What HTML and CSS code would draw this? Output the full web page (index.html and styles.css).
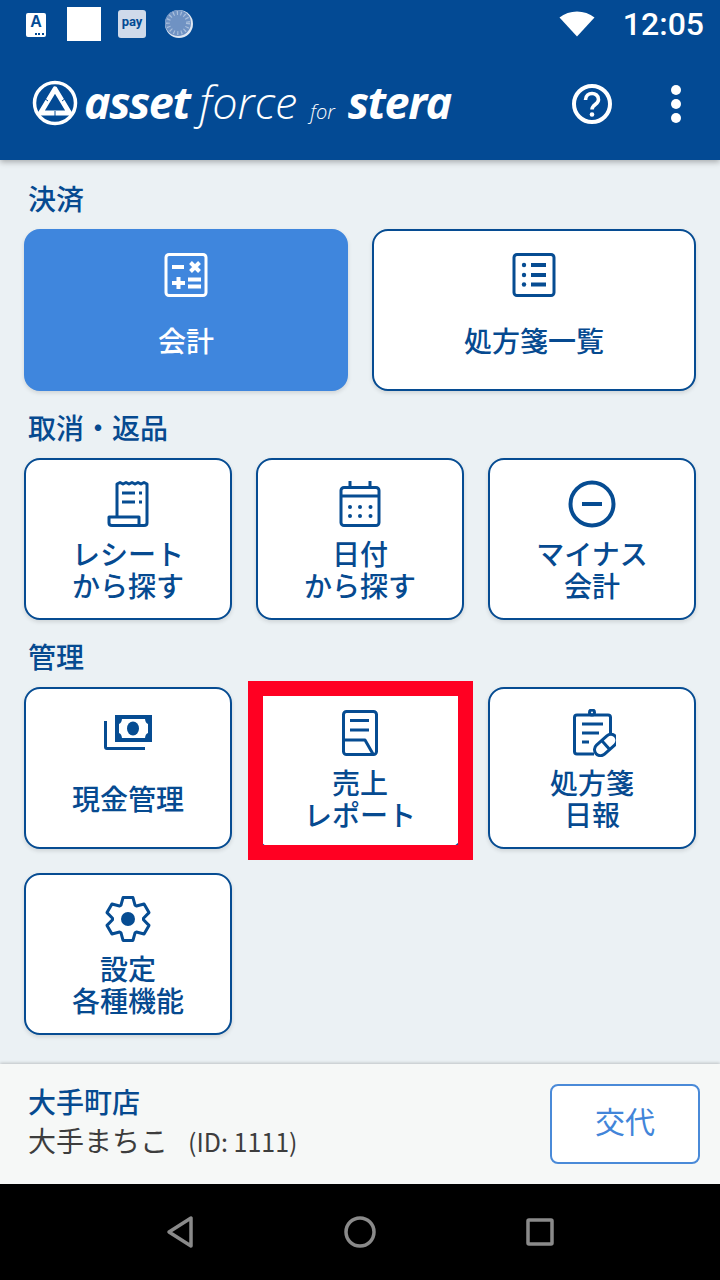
FILE: index.html
```html
<!DOCTYPE html>
<html lang="ja">
<head>
<meta charset="UTF-8">
<meta name="viewport" content="width=device-width, initial-scale=1.0">
<title>asset force for stera</title>
<link rel="stylesheet" href="styles.css">
</head>
<body>

<div class="top">
  <!-- status bar -->
  <div class="status-bar">
    <div class="notif-a"><span>A</span><i></i></div>
    <div class="notif-blank"></div>
    <div class="notif-pay">pay</div>
    <svg class="notif-sync" width="30" height="30" viewBox="0 0 30 30">
      <circle cx="15" cy="15" r="14" fill="#dfe7f2"/>
      <circle cx="14" cy="14" r="13" fill="#6f92c3"/>
      <circle cx="14" cy="14" r="10" fill="none" stroke="#a9bfdc" stroke-width="4" stroke-dasharray="1.2 2.6"/>
    </svg>
    <svg class="wifi" width="36" height="26" viewBox="0 0 36 26">
      <path d="M0.5 6.5C10 -1.5 26 -1.5 35.5 6.5L18 25.5Z" fill="#fff"/>
    </svg>
    <div class="clock">12:05</div>
  </div>

  <header class="app-bar">
    <div class="logo">
      <svg class="logo-mark" width="46" height="46" viewBox="0 0 46 46">
        <circle cx="23" cy="23" r="20.5" fill="none" stroke="#fff" stroke-width="3.5"/>
        <path d="M23 9L37.500 33H8.500Z" fill="none" stroke="#fff" stroke-width="5" stroke-linejoin="round"/>
        <path d="M12 18L16 21M34 18L30 21M23 31V36" fill="none" stroke="#034a94" stroke-width="1"/>
      </svg>
      <span class="logo-asset">asset</span>
      <span class="logo-force">force</span>
      <span class="logo-for">for</span>
      <span class="logo-stera">stera</span>
    </div>
    <div class="app-actions">
      <svg class="help" width="42" height="42" viewBox="0 0 42 42">
        <circle cx="21" cy="21" r="18" fill="none" stroke="#fff" stroke-width="4"/>
        <path d="M14.5 17C14.5 8.5 27.5 8.5 27.5 16.5C27.5 21.5 21 21.5 21 26.5" fill="none" stroke="#fff" stroke-width="3.6"/>
        <circle cx="21" cy="31.5" r="2.3" fill="#fff"/>
      </svg>
      <div class="kebab"><i></i><i></i><i></i></div>
    </div>
  </header>
</div>

<main class="content">
  <h2 class="section-title">決済</h2>
  <div class="grid two">
    <button class="card primary">
      <svg class="icon" viewBox="0 0 48 48">
        <rect x="4" y="3.5" width="40" height="41" rx="3" class="line"/>
        <path d="M10 16H22M28.500 11.500L37.500 20.500M37.500 11.500L28.500 20.500M10 32H23M16.500 26V38M26 28.500H39M26 35.500H39" class="line thick"/>
      </svg>
      <span class="card-label">会計</span>
    </button>
    <button class="card">
      <svg class="icon" viewBox="0 0 48 48">
        <rect x="4" y="3.5" width="40" height="41" rx="3" class="line"/>
        <path d="M21 14H36M21 24H36M21 33.5H36" class="line thick"/>
        <circle cx="14" cy="14" r="2.200" class="dot"/><circle cx="14" cy="24" r="2.200" class="dot"/><circle cx="14" cy="33.5" r="2.200" class="dot"/>
      </svg>
      <span class="card-label">処方箋一覧</span>
    </button>
  </div>

  <h2 class="section-title">取消・返品</h2>
  <div class="grid three">
    <button class="card">
      <svg class="icon" viewBox="0 0 48 48">
        <path d="M13 37V4L16 2.5L19 4L22 2.5L25 4L28 2.5L31 4L34 2.5L37 4L40 2.5L43 4V43C43 45 42 45.5 40 45.5H8C6 45.5 5 44.500 5 43V37H35V45" class="line"/>
        <path d="M18 13H31M18 22H31M35 13H38M35 22H38" class="line"/>
      </svg>
      <span class="card-label">レシート<br>から探す</span>
    </button>
    <button class="card">
      <svg class="icon" viewBox="0 0 48 48">
        <rect x="5" y="7.500" width="38" height="38" rx="3" class="line"/>
        <path d="M5 16H43M14 1V7M34 1V7" class="line"/>
        <circle cx="14" cy="27" r="2" class="dot"/><circle cx="24" cy="27" r="2" class="dot"/><circle cx="34.500" cy="27" r="2" class="dot"/>
        <circle cx="14" cy="36" r="2" class="dot"/><circle cx="24" cy="36" r="2" class="dot"/><circle cx="34.500" cy="36" r="2" class="dot"/>
      </svg>
      <span class="card-label">日付<br>から探す</span>
    </button>
    <button class="card">
      <svg class="icon" viewBox="0 0 48 48">
        <circle cx="24" cy="24" r="21.500" class="line thick"/>
        <path d="M14 24H34" class="line thick"/>
      </svg>
      <span class="card-label">マイナス<br>会計</span>
    </button>
  </div>

  <h2 class="section-title">管理</h2>
  <div class="grid three">
    <button class="card">
      <svg class="icon" viewBox="0 0 48 48">
        <path d="M1.500 12V38C1.500 39 2 39.500 3 39.500H41" class="line"/>
        <path d="M11 6H48V33H11Z" class="dot"/>
        <path d="M18 10H41C41.500 13 42 14 44 15V24C42 25 41.500 26 41 29H18C17.500 26 17 25 15 24V15C17 14 17.500 13 18 10Z" fill="#fff"/>
        <ellipse cx="29" cy="19.500" rx="6" ry="7" class="dot"/>
      </svg>
      <span class="card-label">現金管理</span>
    </button>
    <button class="card highlighted">
      <svg class="icon" viewBox="0 0 48 48">
        <rect x="7.500" y="2.500" width="33" height="43" rx="3" class="line"/>
        <path d="M14 11.500H33M14 21H33M8 31H29L37 45" class="line"/>
      </svg>
      <span class="card-label">売上<br>レポート</span>
      <span class="red-frame"></span>
    </button>
    <button class="card">
      <svg class="icon" viewBox="0 0 48 48">
        <path d="M26 45H9C7.500 45 6.500 44 6.500 42.500V8.500C6.500 7 7.500 6 9 6H40C41.500 6 42.500 7 42.500 8.500V25" class="line"/>
        <circle cx="24" cy="3.500" r="2.500" class="line"/>
        <path d="M14 15H35M14 24H31M14 33H21" class="line"/>
        <g transform="rotate(-42 37.700 36)">
          <rect x="24.700" y="30" width="26" height="12" rx="6" class="line"/>
          <path d="M37.700 30V42" class="line"/>
        </g>
      </svg>
      <span class="card-label">処方箋<br>日報</span>
    </button>
    <button class="card">
      <svg class="icon" viewBox="0 0 48 48">
        <polygon class="line" points="17,10.200 19.050,2.600 28.950,2.600 31.040,10.200 32.430,11 40.050,9 45,17.600 39.470,23.200 39.470,24.800 45,30.400 40.050,39 32.430,37 31.040,37.800 28.950,45.400 19.050,45.400 17,37.800 15.570,37 7.950,39 3,30.400 8.530,24.800 8.530,23.200 3,17.600 7.950,9 15.570,11"/>
        <circle cx="24" cy="24" r="7" class="dot"/>
      </svg>
      <span class="card-label">設定<br>各種機能</span>
    </button>
  </div>
</main>

<footer class="staff-bar">
  <div class="staff-info">
    <div class="shop-name">大手町店</div>
    <div class="staff-name">大手まちこ<span class="staff-id">(ID: 1111)</span></div>
  </div>
  <button class="swap-btn">交代</button>
</footer>

<nav class="nav-bar">
  <svg width="28" height="34" viewBox="0 0 28 34"><path d="M25 3V31L3 17Z" class="nav-shape"/></svg>
  <svg width="32" height="32" viewBox="0 0 32 32"><circle cx="16" cy="16" r="14" class="nav-shape"/></svg>
  <svg width="28" height="28" viewBox="0 0 28 28"><rect x="2" y="2" width="24" height="24" rx="1" class="nav-shape"/></svg>
</nav>

</body>
</html>
```

FILE: styles.css
```css
* {
  box-sizing: border-box;
}

html, body {
  margin: 0;
  height: 100%;
}

body {
  width: 720px;
  height: 1280px;
  display: flex;
  flex-direction: column;
  overflow: hidden;
  background: #ebf1f4;
  font-family: "Noto Sans CJK JP", "Noto Sans", sans-serif;
  color: #064a90;
}

/* status bar + app bar */
.top {
  background: #034a94;
  box-shadow: 0 2px 6px rgba(0, 0, 0, 0.3);
  position: relative;
  z-index: 2;
}

.status-bar {
  height: 48px;
  display: flex;
  align-items: center;
  padding: 0 16px 0 26px;
}

.notif-a {
  width: 20px;
  height: 24px;
  margin-top: 2px;
  background: #fff;
  border-radius: 2px;
  color: #034a94;
  font: bold 16px/18px "Liberation Sans", sans-serif;
  text-align: center;
  position: relative;
}

.notif-a i {
  position: absolute;
  right: 2px;
  bottom: 2px;
  width: 9px;
  height: 2px;
  background: repeating-linear-gradient(90deg, #034a94 0 2px, transparent 2px 3.5px);
}

.notif-blank {
  width: 34px;
  height: 34px;
  margin-left: 21px;
  background: #fff;
}

.notif-pay {
  width: 28px;
  height: 28px;
  margin-left: 17px;
  background: #cfdaea;
  border-radius: 3px;
  color: #034a94;
  font: bold 13px/24px "Roboto", sans-serif;
  text-align: center;
}

.notif-sync {
  margin-left: 18px;
}

.wifi {
  margin-left: auto;
  margin-right: 28px;
}

.clock {
  color: #fff;
  font: 500 32px/48px "Roboto", sans-serif;
}

.app-bar {
  height: 112px;
  display: flex;
  align-items: center;
  justify-content: space-between;
  padding: 0 32px;
}

.logo {
  display: flex;
  align-items: baseline;
  color: #fff;
  font-family: "Open Sans", sans-serif;
  font-style: italic;
  margin-top: -5px;
}

.logo-mark {
  align-self: center;
  margin: 3px 6px 0 0;
}

.logo-asset {
  font-size: 45px;
  font-weight: 700;
  letter-spacing: -1.5px;
}

.logo-force {
  font-size: 45px;
  font-weight: 300;
  margin-left: 10px;
}

.logo-for {
  font-size: 20px;
  font-weight: 300;
  margin-left: 13px;
}

.logo-stera {
  font-size: 45px;
  font-weight: 700;
  letter-spacing: -1.5px;
  margin-left: 13px;
}

.app-actions {
  display: flex;
  align-items: center;
  gap: 58px;
  margin-right: 1px;
}

.help {
  display: block;
}

.kebab {
  display: flex;
  flex-direction: column;
  gap: 4px;
  margin-right: 6px;
}

.kebab i {
  display: block;
  width: 10px;
  height: 10px;
  border-radius: 50%;
  background: #fff;
}

/* menu */
.content {
  flex: 1;
  padding: 20px 24px 0;
}

.section-title {
  margin: 18px 0 9px 4px;
  height: 40px;
  font-size: 28px;
  font-weight: 500;
  line-height: 36px;
}

.section-title:first-child {
  margin-top: 0;
}

.grid {
  display: grid;
  gap: 24px;
}

.grid.two {
  grid-template-columns: repeat(2, 1fr);
}

.grid.three {
  grid-template-columns: repeat(3, 1fr);
}

.card {
  height: 162px;
  padding: 22px 0 18px;
  display: flex;
  flex-direction: column;
  align-items: center;
  background: #fff;
  border: 2px solid #064c92;
  border-radius: 16px;
  box-shadow: 0 2px 4px rgba(0, 0, 0, 0.12);
  color: #064a90;
  font-family: inherit;
  position: relative;
}

.card.primary {
  background: #3f86dd;
  border-color: #3f86dd;
  color: #fff;
}

.icon {
  width: 48px;
  height: 48px;
  flex: none;
  margin-top: -2px;
}

.line {
  fill: none;
  stroke: #064c92;
  stroke-width: 3px;
  stroke-linejoin: round;
}

.line.thick {
  stroke-width: 4px;
}

.dot {
  fill: #064c92;
}

.primary .line {
  stroke: #fff;
}

.card-label {
  height: 64px;
  margin-top: 9px;
  display: flex;
  align-items: center;
  font-size: 28px;
  font-weight: 500;
  line-height: 32px;
  text-align: center;
}

/* red box that was drawn over the screenshot */
.red-frame {
  position: absolute;
  left: -10px;
  right: -11px;
  top: -8px;
  bottom: -13px;
  border: 15px solid #ff0022;
}

/* footer */
.staff-bar {
  height: 120px;
  display: flex;
  align-items: center;
  justify-content: space-between;
  padding: 0 20px 0 28px;
  background: #f6f8f7;
  box-shadow: 0 -1px 3px rgba(0, 0, 0, 0.2);
}

.staff-info {
  padding-bottom: 5px;
}

.shop-name {
  font-size: 28px;
  font-weight: 500;
  line-height: 38px;
}

.staff-name {
  font-size: 28px;
  line-height: 40px;
  color: #3d3d3d;
}

.staff-id {
  margin-left: 20px;
  font-size: 25px;
}

.swap-btn {
  width: 150px;
  height: 80px;
  padding-bottom: 9px;
  background: #fff;
  border: 2px solid #4a8ad8;
  border-radius: 8px;
  color: #4285d9;
  font-family: inherit;
  font-size: 30px;
}

/* android nav */
.nav-bar {
  height: 96px;
  background: #000;
  display: flex;
  align-items: center;
  justify-content: center;
  gap: 150px;
}

.nav-shape {
  fill: none;
  stroke: #8a8a8a;
  stroke-width: 3.5px;
  stroke-linejoin: round;
}
```
